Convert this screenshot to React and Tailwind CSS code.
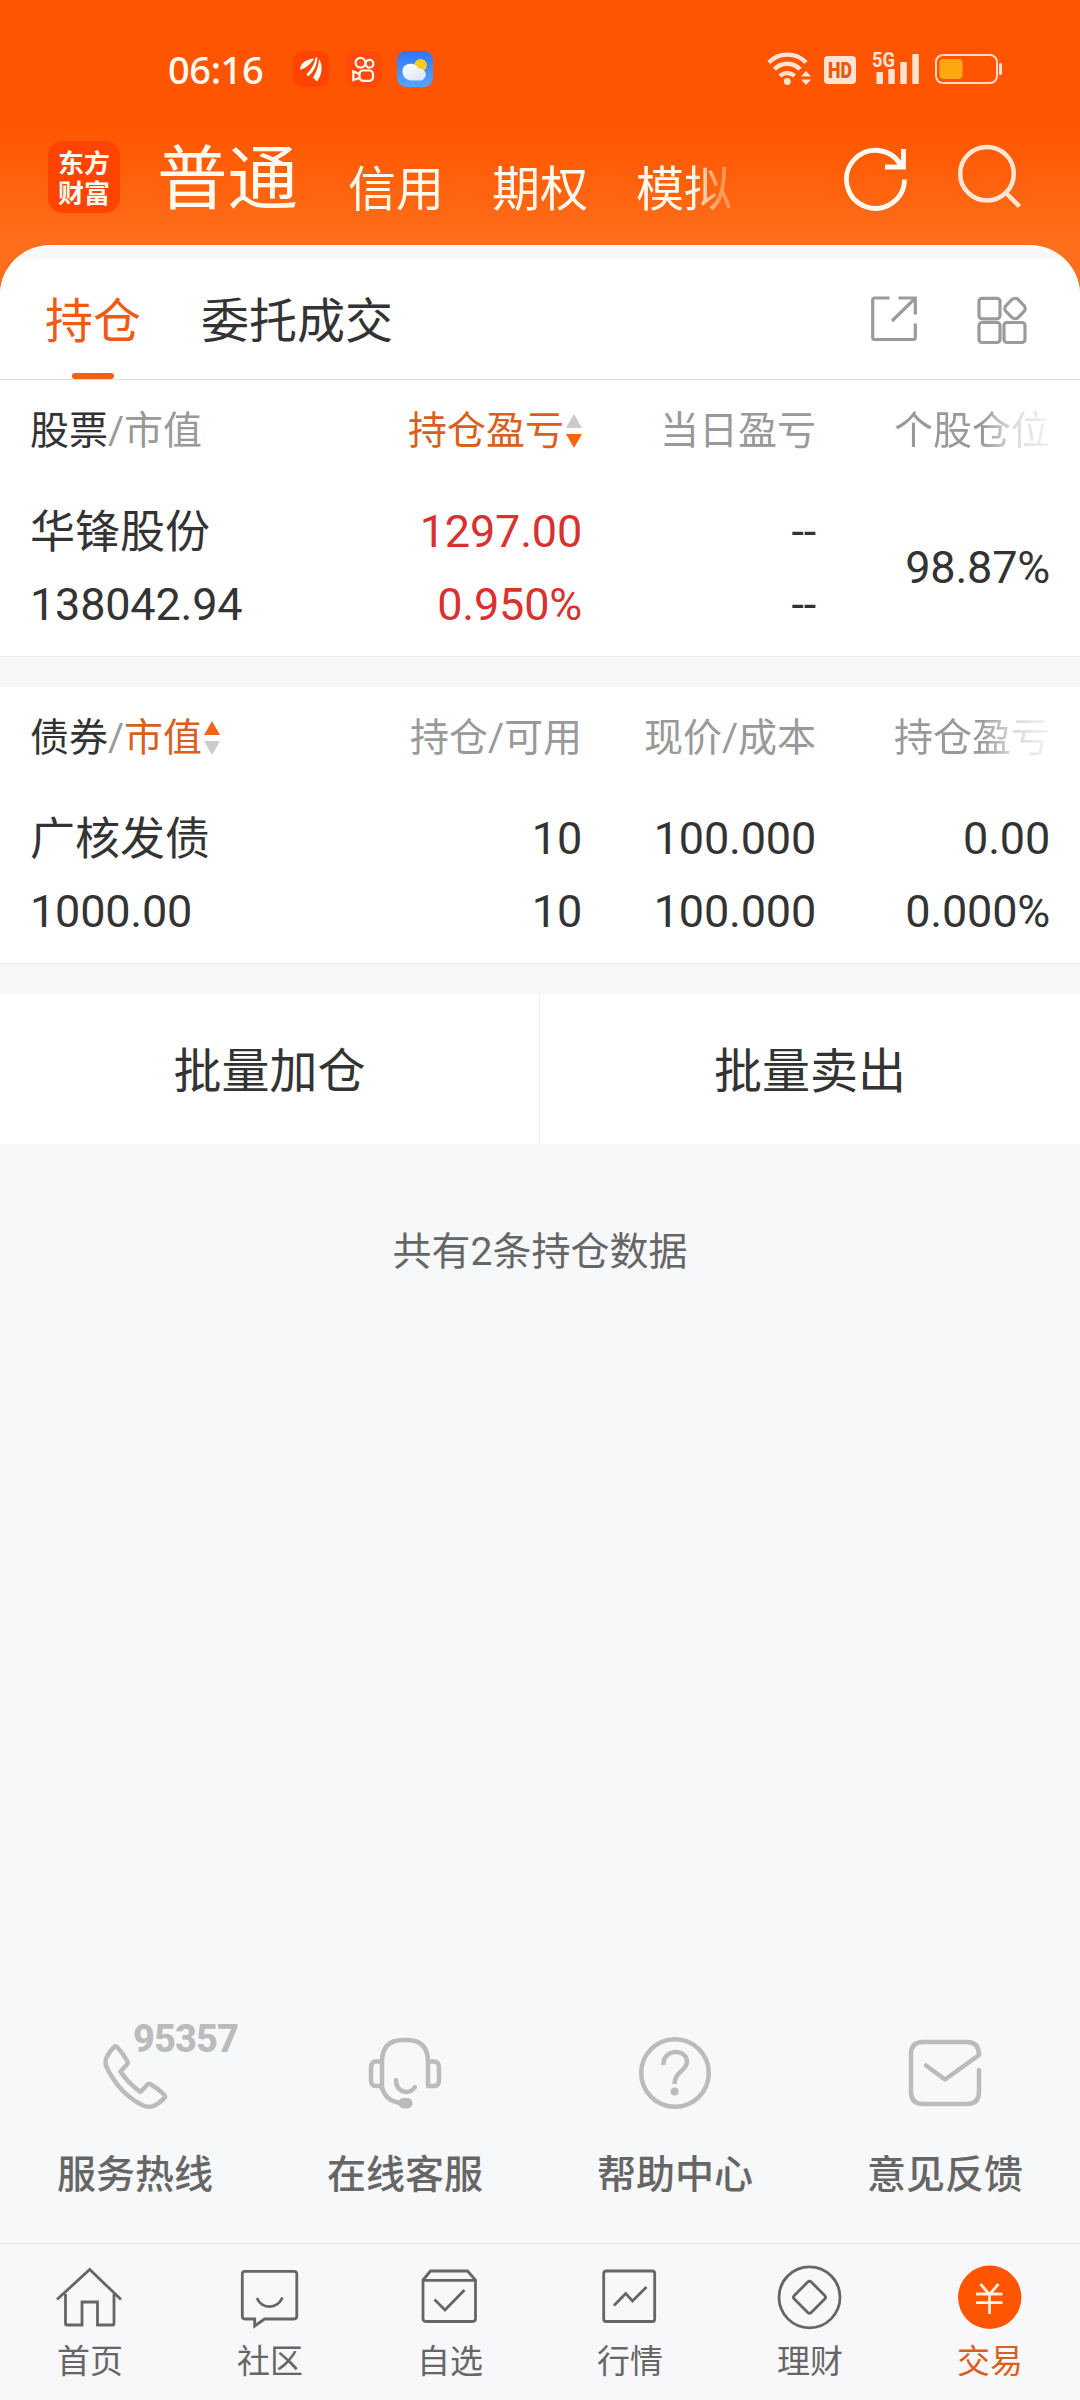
const CJK = "font-['Roboto','Noto_Sans_CJK_SC',sans-serif]";

function StatusBar() {
  return (
    <div className="flex h-[120px] items-start pt-[51px]">
      <div className="-mt-px ml-[168px] h-9 w-[100px] whitespace-nowrap font-['Noto_Sans',sans-serif] text-[38px] font-medium leading-[38px] tracking-[-0.4px] text-[#fffaf0]">
        06:16
      </div>
      <svg className="ml-[25px] size-9" viewBox="0 0 36 36">
        <rect width="36" height="36" rx="9" fill="#ff4400" />
        <g fill="#fffaf0">
          <path d="M7 16.500C9 11.500 14 8 21 7.500C19 12 13 17 7.500 19Z" />
          <path d="M13.500 23C18 19 21.500 13 22.500 6.500L24.300 6.500C24.500 14 20.500 21 15 25.500Z" />
          <path d="M20 26.500C23.500 21 25.800 14 26 8C30 14 29.500 23 24 30.500Z" />
        </g>
      </svg>
      <svg className="ml-4 size-9" viewBox="0 0 36 36" fill="none" stroke="#fffaf0" strokeWidth="2.200">
        <rect width="36" height="36" rx="9" fill="#ff4a0a" stroke="none" />
        <circle cx="15.500" cy="11.700" r="4.900" />
        <circle cx="24.500" cy="12.700" r="3.900" />
        <rect x="14.500" y="19.500" width="13.500" height="10.300" rx="3.500" />
        <path d="M14.500 23L8.300 20.500V29L14.500 27" />
      </svg>
      <svg className="ml-4 size-9" viewBox="0 0 36 36">
        <defs>
          <linearGradient id="sky" x1="0" y1="0" x2="0" y2="1">
            <stop offset="0" stopColor="#2f74f5" />
            <stop offset="1" stopColor="#5aa5fa" />
          </linearGradient>
          <linearGradient id="cloud" x1="0" y1="0" x2="0.500" y2="1">
            <stop offset="0" stopColor="#ffffff" />
            <stop offset="1" stopColor="#dfe8f8" />
          </linearGradient>
        </defs>
        <rect width="36" height="36" rx="9" fill="url(#sky)" />
        <circle cx="23.500" cy="14.300" r="6.300" fill="#fbc926" />
        <path d="M13 29.500A8.500 9 0 0 1 7 15.500A9 9 0 0 1 21.500 17.500A6.200 6.200 0 0 1 24.500 29.500Z" fill="url(#cloud)" />
      </svg>
      <svg className="-mt-2 ml-[334px] h-11 w-[240px]" viewBox="0 -8 240 44">
        <g fill="none" stroke="#ffe3d2" strokeWidth="4.400">
          <path d="M1.800 11.500A26 26 0 0 1 39 11.500" />
          <path d="M7.500 18.300A17.500 17.500 0 0 1 33 18.300" />
          <path d="M13 25A10.500 10.500 0 0 1 27.500 25" />
        </g>
        <g fill="#ffe3d2">
          <circle cx="20.300" cy="30.500" r="3.400" />
          <path d="M34 25.500L39 20L44 25.500ZM34 28.500L39 34L44 28.500Z" />
          <rect x="57" y="5" width="32" height="28" rx="4" />
          <rect x="109.500" y="21" width="6.500" height="12" rx="1" />
          <rect x="121.300" y="18" width="6.500" height="15" rx="1" />
          <rect x="133.300" y="11" width="6.500" height="22" rx="1" />
          <rect x="145.300" y="3" width="6.500" height="30" rx="1" />
          <rect x="232" y="12" width="3" height="12" rx="1.500" />
        </g>
        <text x="73" y="27" textAnchor="middle" fontFamily="Roboto" fontWeight="900" fontSize="22" textLength="24" lengthAdjust="spacingAndGlyphs" fill="#e8580f">HD</text>
        <text x="105" y="15.500" fontFamily="Roboto" fontWeight="700" fontSize="20" textLength="23" lengthAdjust="spacingAndGlyphs" fill="#ffe3d2">5G</text>
        <rect x="169" y="4" width="61" height="28" rx="7" fill="none" stroke="#ffd9c0" strokeWidth="2" />
        <rect x="172.500" y="8" width="23" height="20" rx="4" fill="#ffa70f" />
      </svg>
    </div>
  );
}

function Header() {
  return (
    <div className="flex h-[125px] items-start">
      <div className="ml-12 mt-[21px] flex size-[72px] flex-col items-center justify-center rounded-[15px] bg-[#ff4400] font-['Noto_Sans_CJK_SC',sans-serif] text-[26px] font-bold leading-[30px] text-[#fffaf0]">
        <span className="block h-[30px]">东方</span>
        <span className="block h-[30px]">财富</span>
      </div>
      <div className="ml-[37px] flex h-[105px] w-[610px] items-start whitespace-nowrap text-[48px] leading-[70px] text-[#fffaf0] [mask-image:linear-gradient(90deg,#000_535px,rgba(0,0,0,0.4)_560px,transparent_610px)]">
        <span className="mt-[22px] text-[70.500px] leading-[76px]">普通</span>
        <span className="ml-[50px] mt-[35px]">信用</span>
        <span className="ml-12 mt-[35px]">期权</span>
        <span className="ml-12 mt-[35px]">模拟</span>
      </div>
      <svg className="ml-[73px] mt-[22px] h-[70px] w-[70px]" viewBox="840 142 70 70" fill="none" stroke="#fffaf0" strokeWidth="4.800">
        <path d="M904.500 179.500A29 29 0 1 1 901 165.500" />
        <path d="M903.500 149V167H885" />
      </svg>
      <svg className="ml-[40px] mt-[22px] h-[70px] w-[74px]" viewBox="950 142 74 70" fill="none" stroke="#ffe6d5" strokeWidth="4.500">
        <circle cx="987" cy="173.700" r="26.800" />
        <path d="M1006 193L1019.500 206.500" />
      </svg>
    </div>
  );
}

function Tabs() {
  return (
    <div className="h-[135px] overflow-hidden rounded-t-[50px] bg-[#f8f8fa] pt-[14px]">
      <div className="flex h-[121px] items-start border-b border-[#dedede] bg-white text-[48px] leading-[70px]">
        <div className="ml-[45px] flex h-[121px] w-24 flex-col items-center pt-7 text-[#f05a14]">
          <span>持仓</span>
          <span className="mt-4 h-1.5 w-[42px] rounded-full bg-[#f26012]" />
        </div>
        <div className="ml-[60px] pt-7 text-[#333]">委托成交</div>
        <svg className="ml-[476px] mt-[35px] size-[50px]" viewBox="869 294 50 50" fill="none" stroke="#9b9b9b" strokeWidth="3.200">
          <path d="M889.500 298H874.500Q872.700 298 872.700 300V337.500Q872.700 339.500 874.500 339.500H913.500Q915.300 339.500 915.300 337.500V323.500" />
          <path d="M898.500 298H915.300V314.500M915 298.500L892 321" />
        </svg>
        <svg className="ml-[57px] mt-[35px] h-[52px] w-[54px]" viewBox="976 294 54 52" fill="none" stroke="#9b9b9b" strokeWidth="3.200">
          <rect x="979" y="298.300" width="21" height="20.500" rx="3" />
          <rect x="979" y="322.500" width="21" height="20" rx="3" />
          <rect x="1004" y="322.500" width="21" height="20" rx="3" />
          <rect x="1006.500" y="300" width="17" height="17" rx="4.500" transform="rotate(45 1015 308.500)" />
        </svg>
      </div>
    </div>
  );
}

function Sort({ dir }) {
  return (
    <svg className="h-[34px] w-4 shrink-0" viewBox="0 0 16 34">
      <path d="M0 14L8 0L16 14Z" fill={dir === "up" ? "#f56414" : "#cbcbcb"} />
      <path d="M0 20L8 34L16 20Z" fill={dir === "down" ? "#f56414" : "#cbcbcb"} />
    </svg>
  );
}

const GRID = "grid grid-cols-[318px_234px_234px_234px] px-[30px]";

function Section({ head, children }) {
  return (
    <section className="h-[307px] bg-white">
      <div className={GRID + " h-[100px] items-center pt-px text-[39px] leading-[58px] text-[#999]"}>{head}</div>
      <div className={GRID + " h-[176px] pt-[15px] text-[45px] leading-[73px] text-[#333]"}>{children}</div>
      <div className="h-[31px] border-t border-[#ebecee] bg-[#f6f7f9]" />
    </section>
  );
}

function Pair({ a, b, className = "" }) {
  return (
    <div className={"flex flex-col whitespace-nowrap tracking-[-0.2px] " + className}>
      <span>{a}</span>
      <span>{b}</span>
    </div>
  );
}

function Holding({ name, value }) {
  return (
    <div className="flex flex-col whitespace-nowrap">
      <span className="h-[73px] pt-px">{name}</span>
      <span className="tracking-[-0.2px]">{value}</span>
    </div>
  );
}

const FADE = "whitespace-nowrap text-right [mask-image:linear-gradient(90deg,#000_165px,rgba(0,0,0,0.35)_198px,rgba(0,0,0,0.12)_234px)]";

const services = [
  {
    label: "服务热线",
    icon: (
      <>
        <path d="M113.500 2047.500Q115.500 2045.500 117.500 2047.500Q123 2053.500 127 2060.500Q128.500 2063 126.500 2065L120.500 2071.500Q128 2083 140.500 2092L147.500 2084.500Q149 2083 151 2084.500Q158 2088.500 164 2094.500Q166 2096.500 164 2098.500Q158 2104 153.500 2106Q148 2108 142 2105Q120 2094 107 2068Q104 2062 107 2056.500Q109.500 2052 113.500 2047.500Z" />
        <text x="133" y="2052" fill="#bbb" stroke="none" fontFamily="Roboto" fontWeight="800" fontSize="38" textLength="106">95357</text>
      </>
    ),
  },
  {
    label: "在线客服",
    icon: (
      <>
        <path d="M382 2090V2062Q382 2040 403 2040H407Q428 2040 428 2062V2086H434Q439 2086 439 2080V2068Q439 2061.500 434 2061.500H428M382 2061.500H376Q371 2061.500 371 2068V2080Q371 2086 376 2086H382M382 2087Q385 2101 401 2103" />
        <path d="M396 2080C396 2092 409 2096 415 2087" strokeLinecap="round" />
        <rect x="398.500" y="2098" width="14" height="10.500" rx="5" fill="#bbb" stroke="none" />
      </>
    ),
  },
  {
    label: "帮助中心",
    icon: (
      <>
        <circle cx="675" cy="2073" r="33.800" />
        <path d="M663.500 2065C662.500 2048.500 687 2048 687 2062C687 2070 674.500 2072 674.500 2084" />
        <circle cx="674.600" cy="2091.500" r="4" fill="#bbb" stroke="none" />
      </>
    ),
  },
  {
    label: "意见反馈",
    icon: <path d="M979 2070V2092Q979 2104 967 2104H923Q911 2104 911 2092V2054Q911 2042 923 2042H967Q979 2042 979 2055L945 2079.500L926 2065.500" strokeLinecap="round" />,
  },
];

function Services() {
  return (
    <div className="grid h-[221px] grid-cols-4">
      {services.map((s, i) => (
        <div key={s.label} className="flex flex-col items-center">
          <svg
            className="h-[90px] w-[214px] overflow-visible"
            viewBox={[28 + i * 270, 2022, 214, 90].join(" ")}
            fill="none"
            stroke="#bbb"
            strokeWidth="4.500"
            strokeLinejoin="round"
          >
            {s.icon}
          </svg>
          <span className="mt-[34px] text-[39px] font-medium leading-[58px] text-[#666]">{s.label}</span>
        </div>
      ))}
    </div>
  );
}

const nav = [
  { label: "首页", icon: <path d="M57 2299.500L89.700 2269.500L121 2299.500M65.500 2294V2323.500Q65.500 2325 67 2325H82V2302H97.500V2325H112.500Q114 2325 114 2323.500V2294" /> },
  {
    label: "社区",
    icon: (
      <>
        <path d="M245 2271.300H294Q296.800 2271.300 296.800 2274V2316Q296.800 2319 294 2319H264.500L254.700 2326V2319H245Q242.300 2319 242.300 2316V2274Q242.300 2271.300 245 2271.300Z" />
        <path d="M257 2298C261 2309 277 2310 282.500 2297.500" />
      </>
    ),
  },
  {
    label: "自选",
    icon: (
      <>
        <path d="M423 2280L430.500 2271H467.500L475.500 2280V2318.500Q475.500 2321.500 472.500 2321.500H426Q423 2321.500 423 2318.500ZM423 2280.300H475.500" />
        <path d="M434.500 2299.500L445 2310L464.500 2290" />
      </>
    ),
  },
  {
    label: "行情",
    icon: (
      <>
        <rect x="603.700" y="2271" width="51" height="50.500" rx="2.500" />
        <path d="M614 2305.500L625.700 2293.500L632.500 2301L646.500 2287" />
      </>
    ),
  },
  {
    label: "理财",
    icon: (
      <>
        <circle cx="809.500" cy="2297.300" r="30.500" />
        <rect x="797.500" y="2285.300" width="24" height="24" rx="2.500" transform="rotate(45 809.500 2297.300)" />
      </>
    ),
  },
  {
    label: "交易",
    active: true,
    icon: (
      <>
        <circle cx="989.700" cy="2297.300" r="31.700" fill="#ff5500" stroke="none" />
        <path d="M980.500 2284L989.500 2294.500L998.500 2284M976 2294H1002.500M976 2302.700H1002.500M989.500 2294V2314" stroke="#fff0e0" />
      </>
    ),
  },
];

function BottomNav() {
  return (
    <nav className="grid h-[157px] grid-cols-6 border-t border-[#e2e3e5] bg-[#f8f8fa]">
      {nav.map((n, i) => (
        <div key={n.label} className="flex flex-col items-center pt-[17px]">
          <svg className="h-[70px] w-[80px]" viewBox={[50 + i * 180, 2261, 80, 70].join(" ")} fill="none" stroke="#666" strokeWidth="2.800">
            {n.icon}
          </svg>
          <span className={"mt-[7px] text-[33px] leading-[48px] " + (n.active ? "text-[#d9601c]" : "text-[#666]")}>{n.label}</span>
        </div>
      ))}
    </nav>
  );
}

export default function App() {
  return (
    <div className={"flex h-[2400px] w-[1080px] flex-col overflow-hidden bg-[#f7f8fa] " + CJK}>
      <div className="bg-[linear-gradient(180deg,#ff5500_125px,#ff6e1a_240px)]">
        <StatusBar />
        <Header />
        <Tabs />
      </div>
      <Section
        head={
          <>
            <span><span className="text-[#333]">股票</span>/市值</span>
            <span className="flex items-center justify-end gap-[2px] text-[#d9601c]">持仓盈亏<Sort dir="down" /></span>
            <span className="text-right">当日盈亏</span>
            <span className={FADE}>个股仓位</span>
          </>
        }
      >
        <Holding name="华锋股份" value="138042.94" />
        <Pair a="1297.00" b="0.950%" className="text-right text-[#d93030]" />
        <Pair a="--" b="--" className="text-right" />
        <div className="pt-[36px] text-right tracking-[-0.2px]">98.87%</div>
      </Section>
      <Section
        head={
          <>
            <span className="flex items-center"><span className="text-[#333]">债券</span>/<span className="mr-[2px] text-[#d9601c]">市值</span><Sort dir="up" /></span>
            <span className="text-right">持仓/可用</span>
            <span className="text-right">现价/成本</span>
            <span className={FADE}>持仓盈亏</span>
          </>
        }
      >
        <Holding name="广核发债" value="1000.00" />
        <Pair a="10" b="10" className="text-right" />
        <Pair a="100.000" b="100.000" className="text-right" />
        <Pair a="0.00" b="0.000%" className="text-right" />
      </Section>
      <div className="grid h-[150px] grid-cols-2 bg-white pt-[3px] text-center text-[48px] leading-[150px] text-[#333]">
        <div className="-mt-[3px] h-[150px] border-r border-[#ededf0] pt-[3px]">批量加仓</div>
        <div>批量卖出</div>
      </div>
      <div className="mt-[79px] text-center text-[39px] leading-[58px] text-[#666]">共有2条持仓数据</div>
      <div className="flex-1" />
      <Services />
      <BottomNav />
    </div>
  );
}
